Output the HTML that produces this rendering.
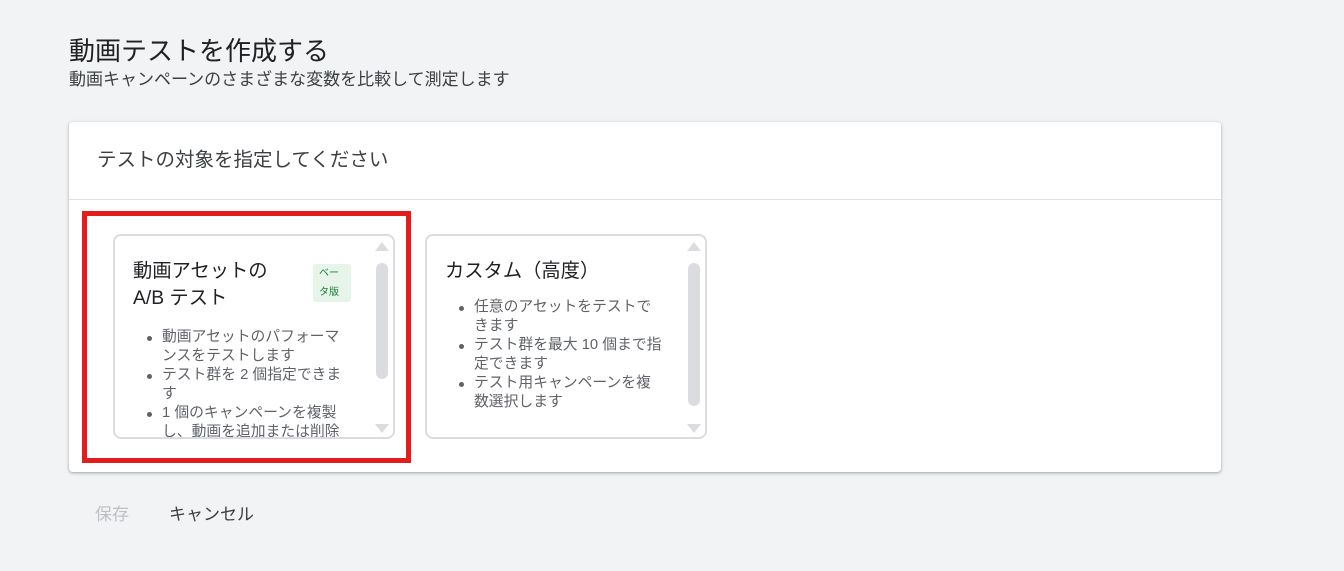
<!DOCTYPE html>
<html><head><meta charset="utf-8"><style>
*{margin:0;padding:0;box-sizing:border-box}
body{width:1344px;height:571px;background:#f1f3f4;font-family:"Liberation Sans","Noto Sans CJK JP",sans-serif;position:relative;overflow:hidden;color:#202124}
.a{position:absolute;white-space:nowrap}
.card{position:absolute;left:69px;top:122px;width:1152px;height:350px;background:#fff;border-radius:4px;box-shadow:0 1px 2px rgba(60,64,67,.3),0 1px 3px 1px rgba(60,64,67,.12)}
.opt{position:absolute;top:234px;width:282px;height:205px;border:2px solid #dadce0;border-radius:8px;background:#fff;overflow:hidden}
.opt ul{position:absolute;list-style:none;font-size:14.8px;line-height:19px;color:#5f6368}
.opt li{position:relative}
.opt li::before{content:"";position:absolute;left:-15px;top:8px;width:5px;height:5px;border-radius:50%;background:#5f6368}
.up{position:absolute;width:0;height:0;border-left:7px solid transparent;border-right:7px solid transparent;border-bottom:9px solid #dadce0}
.dn{position:absolute;width:0;height:0;border-left:7px solid transparent;border-right:7px solid transparent;border-top:9px solid #dadce0}
.th{position:absolute;width:12px;background:#dadce0;border-radius:6px}
</style></head><body>
<div class="a" style="left:69px;top:34px;font-size:26px;line-height:34px">動画テストを作成する</div>
<div class="a" style="left:69px;top:69px;font-size:17px;line-height:22px;color:#3c4043">動画キャンペーンのさまざまな変数を比較して測定します</div>
<div class="card">
  <div class="a" style="left:28px;top:25px;font-size:19.5px;line-height:26px;color:#3c4043">テストの対象を指定してください</div>
  <div style="position:absolute;left:0;right:0;top:77px;height:1px;background:#e0e0e0"></div>
</div>
<div style="position:absolute;left:82px;top:211px;width:329px;height:252px;border:5px solid #e31c1c"></div>
<div class="opt" style="left:113px">
  <div class="a" style="left:18px;top:22px;font-size:19.3px;line-height:27px;color:#202124">動画アセットの<br>A/B テスト</div>
  <div class="a" style="left:198px;top:28px;width:38px;height:38px;background:#e6f4ea;border-radius:3px;color:#188038;font-size:10px;line-height:19px;padding-left:6px">ベー<br>タ版</div>
  <ul style="left:47px;top:92px;width:184px;white-space:normal">
    <li>動画アセットのパフォーマンスをテストします</li>
    <li>テスト群を 2 個指定できます</li>
    <li>1 個のキャンペーンを複製し、動画を追加または削除</li>
  </ul>
  <div class="up" style="left:260px;top:6px"></div>
  <div class="th" style="left:261px;top:27px;height:116px"></div>
  <div class="dn" style="left:260px;top:188px"></div>
</div>
<div class="opt" style="left:425px">
  <div class="a" style="left:18px;top:22px;font-size:19.3px;line-height:27px;color:#202124">カスタム（高度）</div>
  <ul style="left:47px;top:62px;width:194px;white-space:normal">
    <li>任意のアセットをテストで<br>きます</li>
    <li>テスト群を最大 10 個まで指<br>定できます</li>
    <li>テスト用キャンペーンを複<br>数選択します</li>
  </ul>
  <div class="up" style="left:260px;top:6px"></div>
  <div class="th" style="left:261px;top:27px;height:143px"></div>
  <div class="dn" style="left:260px;top:188px"></div>
</div>
<div class="a" style="left:95px;top:504px;font-size:17px;line-height:22px;color:#bdc1c6">保存</div>
<div class="a" style="left:169px;top:504px;font-size:17px;line-height:22px;color:#3c4043">キャンセル</div>
</body></html>
